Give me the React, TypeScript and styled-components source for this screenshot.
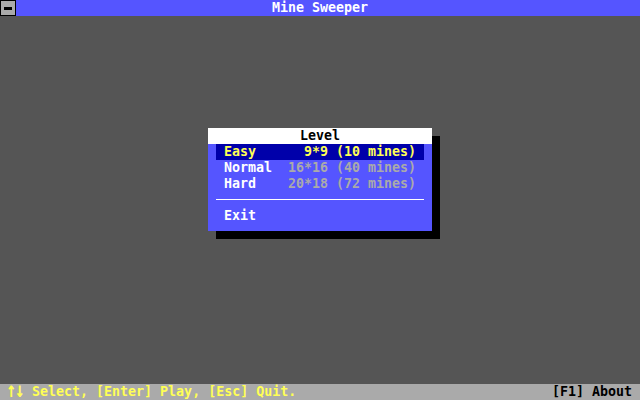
import React, { useState } from 'react';
import styled, { createGlobalStyle } from 'styled-components';

const GlobalStyle = createGlobalStyle`
  html, body {
    margin: 0;
    padding: 0;
    background: #555555;
  }
`;

const Screen = styled.div`
  width: 640px;
  height: 400px;
  display: flex;
  flex-direction: column;
  background: #555555;
  font-family: 'DejaVu Sans Mono', 'Liberation Mono', monospace;
  font-weight: bold;
  font-size: 13.3px;
  line-height: 16px;
  white-space: pre;
  overflow: hidden;
`;

const TitleBar = styled.div`
  height: 16px;
  display: grid;
  grid-template-columns: 16px 1fr 16px;
  background: #5555ff;
  color: #ffffff;
`;

const MenuButton = styled.div`
  box-sizing: border-box;
  width: 16px;
  height: 16px;
  background: #aaaaaa;
  border: 1px solid #000000;
  display: flex;
  align-items: center;
  justify-content: center;
`;

const MenuBar = styled.div`
  width: 8px;
  height: 3px;
  background: #000000;
`;

const Title = styled.div`
  text-align: center;
`;

const Desktop = styled.div`
  flex: 1;
  display: flex;
  justify-content: center;
  align-items: flex-start;
  padding-top: 112px;
`;

const Dialog = styled.div`
  width: 224px;
  background: #5555ff;
  box-shadow: 8px 8px 0 #000000;
`;

const DialogTitle = styled.div`
  height: 16px;
  background: #ffffff;
  color: #000000;
  text-align: center;
`;

const DialogBody = styled.div`
  padding: 0 8px 7px;
`;

const Item = styled.div<{ $selected?: boolean }>`
  height: 16px;
  display: flex;
  justify-content: space-between;
  padding: 0 8px;
  background: ${(p) => (p.$selected ? '#0000aa' : 'transparent')};
  color: ${(p) => (p.$selected ? '#ffff55' : '#ffffff')};
  cursor: default;
`;

const Detail = styled.span<{ $selected?: boolean }>`
  color: ${(p) => (p.$selected ? '#ffff55' : '#aaaaaa')};
`;

const Separator = styled.div`
  height: 16px;
  box-sizing: border-box;
  padding-top: 7px;

  &::before {
    content: '';
    display: block;
    height: 1px;
    background: #ffffff;
  }
`;

const StatusBar = styled.div`
  height: 16px;
  display: flex;
  justify-content: space-between;
  padding: 0 8px;
  background: #aaaaaa;
`;

const Hint = styled.span`
  color: #ffff55;
`;

const Arrows = styled.span`
  display: inline-block;
  letter-spacing: -1px;
  margin-right: 2px;
  transform: scale(1.2, 1.6);
  transform-origin: 50% 65%;
`;

const About = styled.span`
  color: #000000;
`;

const levels = [
  { name: 'Easy', size: '9*9 (10 mines)' },
  { name: 'Normal', size: '16*16 (40 mines)' },
  { name: 'Hard', size: '20*18 (72 mines)' },
];

const App = () => {
  const [selected, setSelected] = useState(0);

  return (
    <Screen>
      <GlobalStyle />
      <TitleBar>
        <MenuButton>
          <MenuBar />
        </MenuButton>
        <Title>Mine Sweeper</Title>
        <div />
      </TitleBar>
      <Desktop>
        <Dialog>
          <DialogTitle>Level</DialogTitle>
          <DialogBody>
            {levels.map((level, i) => (
              <Item key={level.name} $selected={selected === i} onMouseEnter={() => setSelected(i)}>
                <span>{level.name}</span>
                <Detail $selected={selected === i}>{level.size}</Detail>
              </Item>
            ))}
            <Separator />
            <Item $selected={selected === 3} onMouseEnter={() => setSelected(3)}>
              <span>Exit</span>
            </Item>
          </DialogBody>
        </Dialog>
      </Desktop>
      <StatusBar>
        <Hint>
          <Arrows>↑↓</Arrows> Select, [Enter] Play, [Esc] Quit.
        </Hint>
        <About>[F1] About</About>
      </StatusBar>
    </Screen>
  );
};

export default App;
